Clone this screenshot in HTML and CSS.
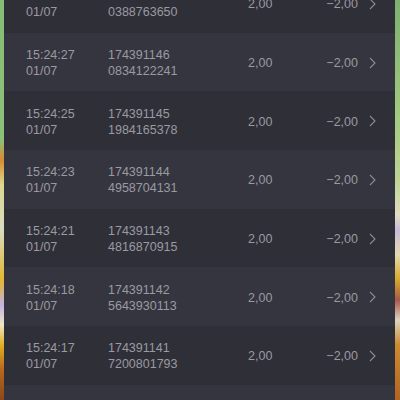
FILE: index.html
```html
<!DOCTYPE html>
<html>
<head>
<meta charset="utf-8">
<link rel="stylesheet" href="styles.css">
</head>
<body>
<div class="panel">
  <div class="list">
    <div class="row dark">
      <div class="col time"><span>15:24:29</span><span>01/07</span></div>
      <div class="col id"><span>174391147</span><span>0388763650</span></div>
      <div class="amt">2,00</div>
      <div class="bal">−2,00</div>
      <svg class="chev" width="7" height="12" viewBox="0 0 7 12"><path d="M1 1 L6 6 L1 11" fill="none" stroke="#8c8c94" stroke-width="1.1"/></svg>
    </div>
    <div class="row light">
      <div class="col time"><span>15:24:27</span><span>01/07</span></div>
      <div class="col id"><span>174391146</span><span>0834122241</span></div>
      <div class="amt">2,00</div>
      <div class="bal">−2,00</div>
      <svg class="chev" width="7" height="12" viewBox="0 0 7 12"><path d="M1 1 L6 6 L1 11" fill="none" stroke="#8c8c94" stroke-width="1.1"/></svg>
    </div>
    <div class="row dark">
      <div class="col time"><span>15:24:25</span><span>01/07</span></div>
      <div class="col id"><span>174391145</span><span>1984165378</span></div>
      <div class="amt">2,00</div>
      <div class="bal">−2,00</div>
      <svg class="chev" width="7" height="12" viewBox="0 0 7 12"><path d="M1 1 L6 6 L1 11" fill="none" stroke="#8c8c94" stroke-width="1.1"/></svg>
    </div>
    <div class="row light">
      <div class="col time"><span>15:24:23</span><span>01/07</span></div>
      <div class="col id"><span>174391144</span><span>4958704131</span></div>
      <div class="amt">2,00</div>
      <div class="bal">−2,00</div>
      <svg class="chev" width="7" height="12" viewBox="0 0 7 12"><path d="M1 1 L6 6 L1 11" fill="none" stroke="#8c8c94" stroke-width="1.1"/></svg>
    </div>
    <div class="row dark">
      <div class="col time"><span>15:24:21</span><span>01/07</span></div>
      <div class="col id"><span>174391143</span><span>4816870915</span></div>
      <div class="amt">2,00</div>
      <div class="bal">−2,00</div>
      <svg class="chev" width="7" height="12" viewBox="0 0 7 12"><path d="M1 1 L6 6 L1 11" fill="none" stroke="#8c8c94" stroke-width="1.1"/></svg>
    </div>
    <div class="row light">
      <div class="col time"><span>15:24:18</span><span>01/07</span></div>
      <div class="col id"><span>174391142</span><span>5643930113</span></div>
      <div class="amt">2,00</div>
      <div class="bal">−2,00</div>
      <svg class="chev" width="7" height="12" viewBox="0 0 7 12"><path d="M1 1 L6 6 L1 11" fill="none" stroke="#8c8c94" stroke-width="1.1"/></svg>
    </div>
    <div class="row dark">
      <div class="col time"><span>15:24:17</span><span>01/07</span></div>
      <div class="col id"><span>174391141</span><span>7200801793</span></div>
      <div class="amt">2,00</div>
      <div class="bal">−2,00</div>
      <svg class="chev" width="7" height="12" viewBox="0 0 7 12"><path d="M1 1 L6 6 L1 11" fill="none" stroke="#8c8c94" stroke-width="1.1"/></svg>
    </div>
    <div class="row light">
      <div class="col time"><span>15:24:15</span><span>01/07</span></div>
      <div class="col id"><span>174391140</span><span>3302918846</span></div>
      <div class="amt">2,00</div>
      <div class="bal">−2,00</div>
      <svg class="chev" width="7" height="12" viewBox="0 0 7 12"><path d="M1 1 L6 6 L1 11" fill="none" stroke="#8c8c94" stroke-width="1.1"/></svg>
    </div>
  </div>
</div>
</body>
</html>
```
FILE: styles.css
```css
html, body {
  margin: 0;
  padding: 0;
  height: 400px;
  overflow: hidden;
}
body {
  background:
    linear-gradient(to bottom,
      #86bd74 0px, #8cc17a 140px, #d98a30 160px, #dcd890 185px, #d8dcc0 230px,
      #e2b830 280px, #c4b2e0 305px, #efe6c8 325px, #e3b020 345px, #b8661e 370px, #8a4a18 400px)
      left top / 5px 400px no-repeat,
    linear-gradient(to bottom,
      #7db070 0px, #9cc47e 100px, #c0d494 180px, #e2dcc0 215px, #c8bcd8 230px, #e6d8b0 255px,
      #d6a82a 280px, #a8584a 300px, #ddd4c0 320px, #cc8a30 345px, #b06424 400px)
      right top / 5px 400px no-repeat,
    #2f2f38;
  font-family: "Liberation Sans Narrow", "Liberation Sans", Arial, sans-serif;
}
.panel {
  margin: 0 5px 0 4px;
  height: 400px;
  overflow: hidden;
  background: #2f2f38;
}
.list {
  display: flex;
  flex-direction: column;
  margin-top: -26px;
}
.row {
  box-sizing: border-box;
  height: 58.7px;
  padding-top: 2px;
  flex: none;
  display: flex;
  align-items: center;
  color: #9a9aa1;
  font-size: 12.5px;
}
.row.dark { background: #2f2f38; }
.row.light { background: #35353f; }
.col {
  display: flex;
  flex-direction: column;
  line-height: 16px;
}
.time {
  margin-left: 22px;
  width: 82px;
}
.id {
  width: 140px;
}
.amt {
  width: 60px;
}
.bal {
  width: 50px;
  text-align: right;
}
.chev {
  margin-left: 11px;
  margin-top: -1px;
}
```
